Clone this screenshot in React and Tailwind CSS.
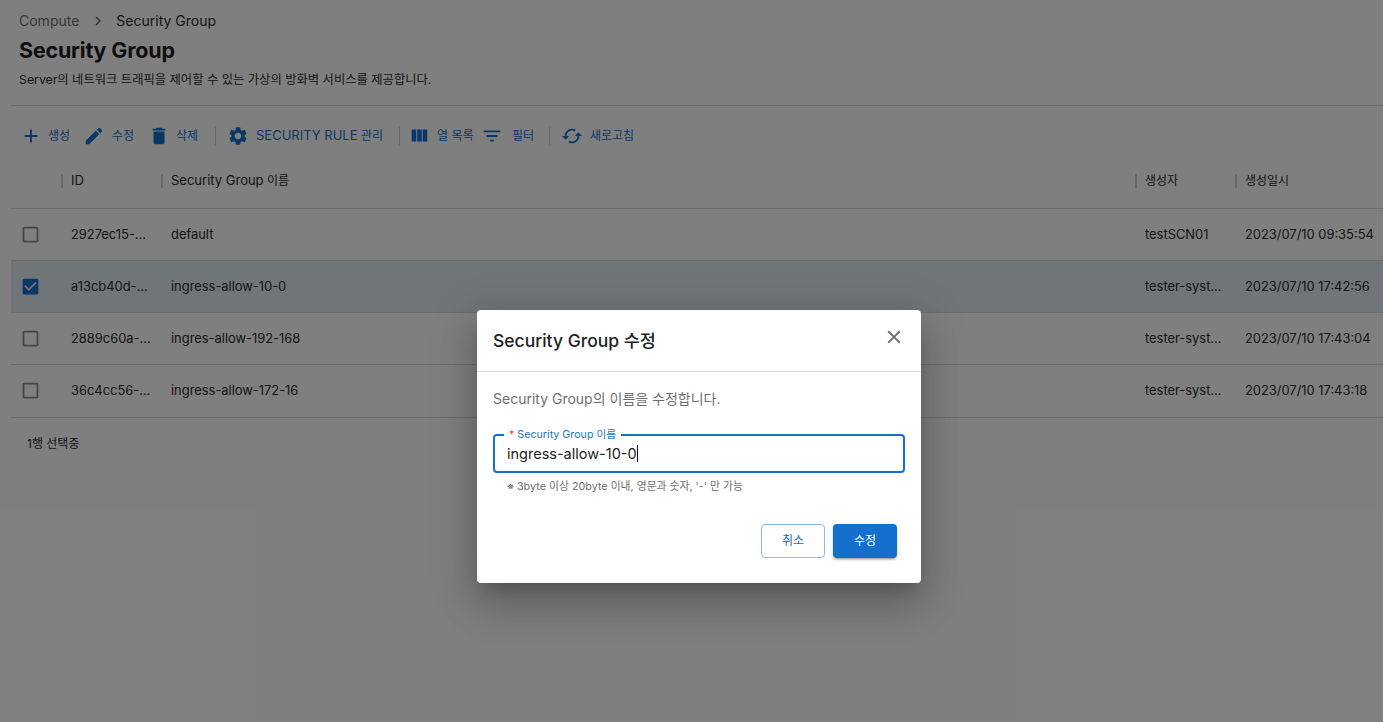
import React from 'react';

const icons = {
  add: 'M19 13h-6v6h-2v-6H5v-2h6V5h2v6h6v2z',
  edit: 'M3 17.25V21h3.75L17.81 9.94l-3.75-3.75L3 17.25zM20.71 7.04c.39-.39.39-1.02 0-1.41l-2.34-2.34a.9959.9959 0 0 0-1.41 0l-1.83 1.83 3.75 3.75 1.83-1.83z',
  trash: 'M6 19c0 1.1.9 2 2 2h8c1.1 0 2-.9 2-2V7H6v12zM19 4h-3.5l-1-1h-5l-1 1H5v2h14V4z',
  gear: 'M19.14 12.94c.04-.3.06-.61.06-.94 0-.32-.02-.64-.07-.94l2.03-1.58c.18-.14.23-.41.12-.61l-1.92-3.32c-.12-.22-.37-.29-.59-.22l-2.39.96c-.5-.38-1.03-.7-1.62-.94l-.36-2.54c-.04-.24-.24-.41-.48-.41h-3.84c-.24 0-.43.17-.47.41l-.36 2.54c-.59.24-1.13.57-1.62.94l-2.39-.96c-.22-.08-.47 0-.59.22L2.74 8.87c-.12.21-.08.47.12.61l2.03 1.58c-.05.3-.09.63-.09.94s.02.64.07.94l-2.03 1.58c-.18.14-.23.41-.12.61l1.92 3.32c.12.22.37.29.59.22l2.39-.96c.5.38 1.03.7 1.62.94l.36 2.54c.05.24.24.41.48.41h3.84c.24 0 .44-.17.47-.41l.36-2.54c.59-.24 1.13-.56 1.62-.94l2.39.96c.22.08.47 0 .59-.22l1.92-3.32c.12-.22.07-.47-.12-.61l-2.01-1.58zM12 15.6c-1.98 0-3.6-1.62-3.6-3.6s1.62-3.6 3.6-3.6 3.6 1.62 3.6 3.6-1.62 3.6-3.6 3.6z',
  columns: 'M10 18h5V5h-5v13zm-6 0h5V5H4v13zM16 5v13h5V5h-5z',
  filter: 'M10 18h4v-2h-4v2zM3 6v2h18V6H3zm3 7h12v-2H6v2z',
  cached: 'M19 8l-4 4h3c0 3.31-2.69 6-6 6-1.01 0-1.97-.25-2.8-.7l-1.46 1.46C8.97 19.54 10.43 20 12 20c4.42 0 8-3.58 8-8h3l-4-4zM6 12c0-3.31 2.69-6 6-6 1.01 0 1.97.25 2.8.7l1.46-1.46C15.03 4.46 13.57 4 12 4c-4.42 0-8 3.58-8 8H1l4 4 4-4H6z',
  checked: 'M19 3H5c-1.11 0-2 .9-2 2v14c0 1.1.89 2 2 2h14c1.11 0 2-.9 2-2V5c0-1.1-.89-2-2-2zm-9 14l-5-5 1.41-1.41L10 14.17l7.59-7.59L19 8l-9 9z',
  unchecked: 'M19 5v14H5V5h14m0-2H5c-1.1 0-2 .9-2 2v14c0 1.1.9 2 2 2h14c1.1 0 2-.9 2-2V5c0-1.1-.9-2-2-2z',
  close: 'M19 6.41 17.59 5 12 10.59 6.41 5 5 6.41 10.59 12 5 17.59 6.41 19 12 13.41 17.59 19 19 17.59 13.41 12z',
};

const Icon = ({ name, className }) => (
  <svg viewBox="0 0 24 24" fill="currentColor" className={className}>
    <path d={icons[name]} />
  </svg>
);

const rows = [
  { id: '2927ec15-...', name: 'default', owner: 'testSCN01', date: '2023/07/10 09:35:54' },
  { id: 'a13cb40d-...', name: 'ingress-allow-10-0', owner: 'tester-syst...', date: '2023/07/10 17:42:56', selected: true },
  { id: '2889c60a-...', name: 'ingres-allow-192-168', owner: 'tester-syst...', date: '2023/07/10 17:43:04' },
  { id: '36c4cc56-...', name: 'ingress-allow-172-16', owner: 'tester-syst...', date: '2023/07/10 17:43:18', last: true },
];

const ToolButton = ({ icon, children, className }) => (
  <div className={`flex items-center ${className}`}>
    <Icon name={icon} className="w-[22px] h-[22px] -mx-px shrink-0" />
    <span className="whitespace-nowrap">{children}</span>
  </div>
);

const Sep = () => <div className="w-px h-[18px] bg-[#d6d6d6]" />;

const HeadCell = ({ children }) => (
  <div className="flex items-center h-full -ml-px">
    <div className="w-[2px] h-[14px] bg-[#d0d0d0]" />
    <span className="pl-2 whitespace-nowrap">{children}</span>
  </div>
);

const App = () => {
  return (
    <div className="relative h-[722px] overflow-hidden bg-white pl-[11px] font-['Inter','Noto_Sans_CJK_KR',sans-serif] text-[#2b2b2b]">
      <div className="pl-2 pt-[13px] h-[106px] border-b border-[#d9d9d9]">
        <div className="flex items-center h-4 text-sm leading-4">
          <span className="text-[#6f6f6f]">Compute</span>
          <svg viewBox="0 0 10 10" className="w-2.5 h-2.5 ml-[14px] mr-[13px] text-[#555]" fill="none" stroke="currentColor" strokeWidth="1.3">
            <path d="M3 1l4 4-4 4" />
          </svg>
          <span>Security Group</span>
        </div>
        <h1 className="mt-[7px] text-[21.5px] leading-7 font-bold tracking-[-0.2px] text-[#1c1c1c]">Security Group</h1>
        <p className="mt-[8px] text-[12.3px] leading-4">Server의 네트워크 트래픽을 제어할 수 있는 가상의 방화벽 서비스를 제공합니다.</p>
      </div>

      <div className="flex items-center h-[58px] pl-[10px] pt-[2px] text-xs text-[#1470cc]">
        <ToolButton icon="add" className="gap-[7px] w-[63px]">생성</ToolButton>
        <ToolButton icon="edit" className="gap-2 w-[65px]">수정</ToolButton>
        <ToolButton icon="trash" className="gap-[7px] w-[66px]">삭제</ToolButton>
        <Sep />
        <ToolButton icon="gear" className="gap-2 ml-[12px] w-[171px]">
          <span className="text-[13px]">SECURITY RULE</span> 관리
        </ToolButton>
        <Sep />
        <ToolButton icon="columns" className="gap-2 ml-[9px] w-[73px]">열 목록</ToolButton>
        <ToolButton icon="filter" className="gap-[10px] w-[67px]">필터</ToolButton>
        <Sep />
        <ToolButton icon="cached" className="gap-2 ml-[12px]">새로고침</ToolButton>
      </div>

      <div className="grid grid-cols-[51px_100px_974px_100px_1fr] h-[45px] pb-[10px] items-center text-xs border-b border-[#d9d9d9]">
        <div />
        <HeadCell><span className="text-[13px]">ID</span></HeadCell>
        <HeadCell><span className="text-[13px]">Security Group</span> 이름</HeadCell>
        <HeadCell>생성자</HeadCell>
        <HeadCell>생성일시</HeadCell>
      </div>

      {rows.map((row) => (
        <div
          key={row.id}
          className={`grid grid-cols-[51px_100px_974px_100px_1fr] items-center text-[12.9px] border-b border-[#d9d9d9] ${row.last ? 'h-[53px] pb-px' : 'h-[52px]'} ${row.selected ? 'bg-[#e0ebf0]' : ''}`}
        >
          <div className="pl-[9px] flex items-center">
            <Icon
              name={row.selected ? 'checked' : 'unchecked'}
              className={`w-[21px] h-[21px] ${row.selected ? 'text-[#1470cc]' : 'text-[#8a8a8a]'}`}
            />
          </div>
          <span className="pl-[9px]">{row.id}</span>
          <span className="pl-[9px]">{row.name}</span>
          <span className="pl-[9px]">{row.owner}</span>
          <span className="pl-[9px] whitespace-nowrap">{row.date}</span>
        </div>
      ))}

      <div className="pl-4 pt-[18px] text-xs leading-4">1행 선택중</div>

      {/* dimmed backdrop + dialog */}
      <div className="absolute inset-0 flex items-start justify-center pt-[310px] pl-[15px] bg-black/50">
        <div className="w-[444px] h-[273px] bg-white rounded shadow-[0_11px_15px_-7px_rgba(0,0,0,0.2),0_24px_38px_3px_rgba(0,0,0,0.14),0_9px_46px_8px_rgba(0,0,0,0.12)]">
          <div className="flex items-center justify-between h-[62px] pl-4 pr-4 border-b border-[#e0e0e0]">
            <h2 className="text-[17.5px] font-medium text-[#222] mt-[1px]">Security Group 수정</h2>
            <Icon name="close" className="w-[22px] h-[22px] text-[#6b6b6b] mt-[-8px]" />
          </div>
          <div className="px-4">
            <p className="mt-[18px] text-sm leading-[17px] text-[#6f6f6f]">Security Group의 이름을 수정합니다.</p>
            <div className="relative mt-[27px] h-[39px] border-2 border-[#1470cc] rounded flex items-center pl-3">
              <span className="absolute -top-[7px] left-[9px] bg-white px-[5px] text-[10.7px] leading-3 text-[#1976d2] whitespace-nowrap">
                <span className="text-[#e8541c] mr-[3px]">*</span>Security Group 이름
              </span>
              <span className="text-[14.5px] text-[#222]">ingress-allow-10-0</span>
              <span className="w-px h-[17px] bg-[#111]" />
            </div>
            <p className="mt-[7px] pl-[14px] text-[10.8px] leading-[14px] text-[#6f6f6f]">※ 3byte 이상 20byte 이내, 영문과 숫자, '-' 만 가능</p>
            <div className="flex justify-end gap-2 mt-[30px] pr-2">
              <button className="w-16 h-[34px] rounded border border-[#8bbbea] text-[#1470cc] text-xs">취소</button>
              <button className="w-16 h-[34px] rounded bg-[#1470cc] text-white text-xs shadow-[0_3px_1px_-2px_rgba(0,0,0,0.2),0_2px_2px_0_rgba(0,0,0,0.14),0_1px_5px_0_rgba(0,0,0,0.12)]">수정</button>
            </div>
          </div>
        </div>
      </div>
    </div>
  );
};

export default App;
